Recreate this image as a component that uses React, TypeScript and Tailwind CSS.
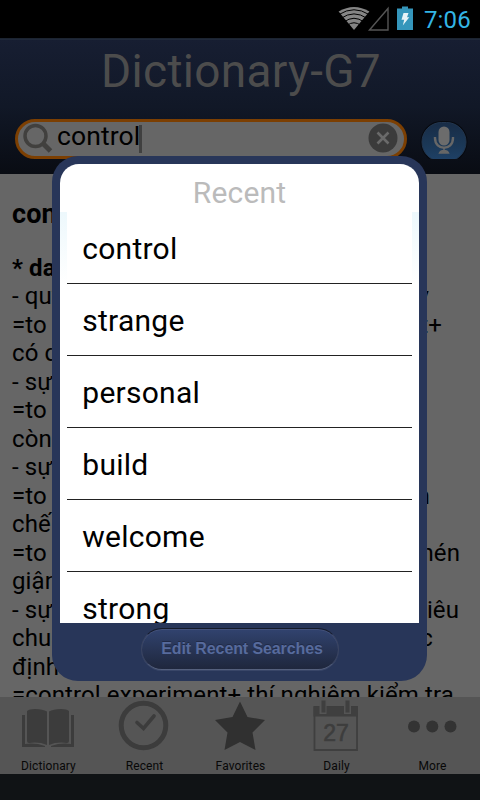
import React from "react";

type Line = { left: string; right?: string; end?: string; bold?: boolean };

const LINES: Line[] = [
  { left: "* danh", bold: true },
  { left: "- quyền", right: "chỉ huy", end: "w-[417px]" },
  { left: "=to have", right: "it+", end: "w-[430px]" },
  { left: "có quyền" },
  { left: "- sự hạn" },
  { left: "=to lose" },
  { left: "còn nữa" },
  { left: "- sự nén" },
  { left: "=to lose", right: "kiềm", end: "w-[418px]" },
  { left: "chế được" },
  { left: "=to keep", right: "nén", end: "w-[448px]" },
  { left: "giận dữ" },
  { left: "- sự thử", right: "tiêu", end: "w-[447px]" },
  { left: "chuẩn", right: "các", end: "w-[421px]" },
  { left: "định" },
  { left: "=control experiment+ thí nghiệm kiểm tra" },
];

const RECENT = ["control", "strange", "personal", "build", "welcome", "strong"];

function StatusBar() {
  return (
    <div className="flex h-[38px] shrink-0 items-center justify-end bg-black pr-[9px]">
      <svg width="82" height="38" viewBox="338 0 82 38">
        <path d="M354 30 L338.600 11.500 Q354 2.500 369.400 11.500 Z" fill="#858585" />
        <g fill="none" stroke="#000" strokeWidth="1">
          <path d="M339 14.500 Q354 5 369 14.500" />
          <path d="M341 18.300 Q354 9.500 367 18.300" />
          <path d="M344 22 Q354 14.500 364 22" />
          <path d="M347 25.500 Q354 20 361 25.500" />
        </g>
        <path d="M369.500 30 L388 8.500 V30 Z" fill="none" stroke="#555" strokeWidth="1.400" />
        <path d="M402 6.500 h6 v2 h5 V30 h-16 V8.500 h5 Z" fill="#3596bb" />
        <path d="M403.500 13 h5 l-1.500 4.300 h2.300 l-6.500 8.200 l1.400 -5.700 h-2.700 Z" fill="#e8f3f7" />
      </svg>
      <span className="ml-[4px] pt-px text-[24px] leading-[38px] tracking-[0.200px] text-[#33b5e5]">7:06</span>
    </div>
  );
}

function Header() {
  return (
    <header className="flex h-[136px] shrink-0 flex-col border-t border-[#1c2431] bg-linear-to-b from-[#171e32] via-[#111827] to-[#090c13] shadow-[inset_0_1px_0_#20293a]">
      <h1 className="h-[80px] pl-[2px] pt-[5px] text-center text-[46px] leading-[54px] tracking-[0.300px] text-[#4c4c4c]">Dictionary-G7</h1>
      <div className="flex items-start pl-[15px]">
        <div className="flex h-[40px] w-[392px] items-center rounded-full border-[3px] border-[#7c3f02] bg-[#666] pl-[4px] pr-[6px]">
          <svg width="32" height="34" viewBox="22 122 32 34" fill="none" stroke="#41403e">
            <circle cx="35.500" cy="136" r="10.500" strokeWidth="3.500" />
            <path d="M43 143.500 L50.500 151" strokeWidth="5" />
          </svg>
          <span className="ml-[3px] -mt-[6px] text-[26.500px] leading-[34px] tracking-[0.100px] text-black">control</span>
          <span className="-ml-px h-[28px] w-[3px] bg-[#404040]" />
          <svg className="ml-auto" width="30" height="34" viewBox="0 -1 30 34">
            <circle cx="15" cy="15" r="14.500" fill="#3b3b3b" />
            <path d="M9.500 9.500 l11 11 M20.500 9.500 l-11 11" stroke="#6a6a6a" strokeWidth="2.600" />
          </svg>
        </div>
        <svg className="ml-[12px]" width="50" height="40" viewBox="419 119 50 40">
          <defs>
            <linearGradient id="mic" x1="0" y1="0" x2="0" y2="1">
              <stop offset="0" stopColor="#182c46" />
              <stop offset="0.600" stopColor="#1b3857" />
              <stop offset="1" stopColor="#1f4268" />
            </linearGradient>
          </defs>
          <rect x="420.500" y="121" width="47" height="42" rx="21" fill="#070a10" />
          <rect x="422" y="122.500" width="44" height="39" rx="19.500" fill="url(#mic)" stroke="#22364f" />
          <rect x="438.500" y="126.500" width="11" height="19" rx="5.500" fill="#6c6c6c" />
          <path d="M435 137 v1 c0 13 18 13 18 0 v-1" fill="none" stroke="#676767" strokeWidth="2.400" />
          <path d="M444 148 v3 M439.500 153 q1 -2.500 4.500 -2.500 q3.500 0 4.500 2.500 Z" fill="#676767" stroke="#676767" strokeWidth="1.500" />
        </svg>
      </div>
    </header>
  );
}

function Article() {
  return (
    <main className="h-[523px] shrink-0 overflow-hidden bg-[#666] pl-[12px] pt-[24px] text-[24px] tracking-[0.100px] text-black">
      <h2 className="h-[55.600px] text-[27px] font-bold leading-[32px]">control</h2>
      {LINES.map((l, i) => (
        <div key={i} className={`flex h-[28.500px] justify-between whitespace-nowrap leading-[28.500px] ${l.end ?? ""} ${l.bold ? "font-bold" : ""}`}>
          <span>{l.left}</span>
          {l.right && <span>{l.right}</span>}
        </div>
      ))}
    </main>
  );
}

function Tab({ label, children }: { label: string; children: React.ReactNode }) {
  return (
    <div className="flex w-[96px] flex-col items-center">
      <svg className="shrink-0" width="96" height="60" viewBox="0 0 96 60">{children}</svg>
      <span className="pl-px text-[12px] leading-[19px] tracking-[0.100px] text-[#080808]">{label}</span>
    </div>
  );
}

function TabBar() {
  return (
    <nav className="flex h-[77px] shrink-0 bg-[#555]">
      <Tab label="Dictionary">
        <g fill="#3c3c3c">
          <path d="M22 18 h3 v29 q10 -1.500 20 2 v1 H22 Z M74 18 h-3 v29 q-10 -1.500 -20 2 v1 H74 Z" />
          <path d="M27 14 q2 -2 8 -2 q8 0 12 2.500 V48 q-8 -3.500 -18 -2 q-2 0 -2 -2 Z" />
          <path d="M69 14 q-2 -2 -8 -2 q-8 0 -12 2.500 V48 q8 -3.500 18 -2 q2 0 2 -2 Z" />
        </g>
      </Tab>
      <Tab label="Recent">
        <circle cx="47.500" cy="28.500" r="22.300" fill="none" stroke="#3c3c3c" strokeWidth="5" />
        <path d="M41 25.500 l6.500 6 L58 19" fill="none" stroke="#3c3c3c" strokeWidth="3.600" strokeLinecap="round" />
      </Tab>
      <Tab label="Favorites">
        <path d="M48 4.500 L55.500 20 L73 23 L60.500 35.500 L63.500 53 L48 45 L32.500 53 L35.500 35.500 L23 23 L40.500 20 Z" fill="#303030" />
      </Tab>
      <Tab label="Daily">
        <path d="M26.500 10 H69 V53 H26.500 Z" fill="none" stroke="#3f3f3f" strokeWidth="1.800" />
        <rect x="25.500" y="9.500" width="44" height="10" fill="#3f3f3f" />
        <rect x="31.500" y="3" width="7" height="14" fill="#555" />
        <rect x="56" y="3" width="7" height="14" fill="#555" />
        <rect x="33.500" y="3.500" width="4" height="12" fill="#3f3f3f" />
        <rect x="57.500" y="3.500" width="4" height="12" fill="#3f3f3f" />
        <text x="48" y="44" textAnchor="middle" className="font-['Liberation_Sans'] text-[23px]" fill="#3d3d3d" stroke="#3d3d3d" strokeWidth="0.600">27</text>
      </Tab>
      <Tab label="More">
        <g fill="#333">
          <circle cx="30" cy="29.500" r="6" />
          <circle cx="48.300" cy="29.500" r="6" />
          <circle cx="66.500" cy="29.500" r="6" />
        </g>
      </Tab>
    </nav>
  );
}

function RecentDialog() {
  return (
    <section className="absolute left-[52px] top-[156px] flex h-[525px] w-[375px] flex-col rounded-[26px] bg-[#283659] px-[8px] pt-[8px]">
      <div className="h-[459px] shrink-0 overflow-hidden rounded-t-[19px] bg-white">
        <h2 className="h-[48px] pt-[11px] text-center text-[30px] leading-[36px] tracking-[0.200px] text-[#bbb]">Recent</h2>
        <div className="flex">
          <div className="h-[72px] w-[7px] bg-linear-to-b from-[#edf8fc] to-white" />
          <ul className="w-[345px]">
            {RECENT.map((w) => (
              <li key={w} className="h-[72px] border-b border-[#222] pl-[15.300px] text-[30px] leading-[74px] tracking-[0.250px] text-black">{w}</li>
            ))}
          </ul>
          <div className="h-[72px] w-[7px] bg-linear-to-b from-[#edf8fc] to-white" />
        </div>
      </div>
      <button className="mx-auto mt-[5px] h-[42px] w-[198px] whitespace-nowrap rounded-full border border-t-[#151a29] border-x-[#3b4561] border-b-[#55607d] bg-linear-to-b from-[#31436f] to-[#1f273d] pl-[5px] font-['Liberation_Sans'] text-[16px] font-bold leading-[38px] tracking-[-0.100px] text-[#576b9d] shadow-[inset_0_1px_0_#45527a,0_1px_0_#394668] text-shadow-[0_-1px_0_#202a47]">
        Edit Recent Searches
      </button>
    </section>
  );
}

export default function App() {
  return (
    <div className="relative flex h-[800px] w-[480px] flex-col overflow-hidden bg-[#101315] font-[Roboto,'Noto_Sans',sans-serif]">
      <StatusBar />
      <Header />
      <Article />
      <TabBar />
      <RecentDialog />
    </div>
  );
}
